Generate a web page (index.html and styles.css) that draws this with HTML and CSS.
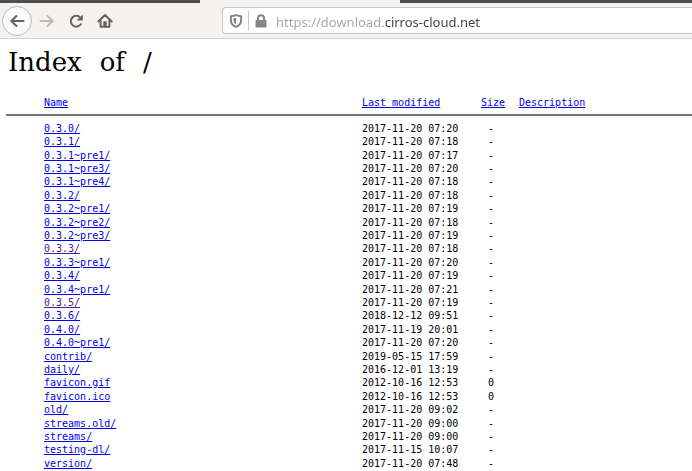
FILE: index.html
```
<!DOCTYPE html>
<html lang="en">
<head>
<meta charset="utf-8">
<title>Index of /</title>
<link rel="stylesheet" href="styles.css">
</head>
<body>
<header class="browser">
  <div class="tabstrip"><div class="tab"></div></div>
  <nav class="toolbar" aria-label="Browser">
    <button class="tool back" type="button" aria-label="Back">
      <svg width="16" height="16" viewBox="0 0 16 16"><path d="M14.500 8H2.500M7.500 3L2.300 8l5.200 5"/></svg>
    </button>
    <button class="tool forward" type="button" aria-label="Forward">
      <svg width="16" height="16" viewBox="0 0 16 16"><path d="M1.500 8h12M8.500 3l5.200 5-5.200 5"/></svg>
    </button>
    <button class="tool" type="button" aria-label="Reload">
      <svg width="16" height="16" viewBox="0 0 16 16"><path d="M12.800 11.200A5.400 5.400 0 1 1 12.300 4.600"/><path class="solid" d="M14.800 1.400v6.200H8.600z"/></svg>
    </button>
    <button class="tool" type="button" aria-label="Home">
      <svg width="16" height="16" viewBox="0 0 16 16"><path d="M1.300 8.500L8 2l6.700 6.500M3.600 7.500v6.300h8.800V7.500"/><path class="solid" d="M6.300 8.300h3.400v5.500H6.300z"/></svg>
    </button>
    <div class="address">
      <svg class="shield" width="14" height="14" viewBox="0 0 14 14"><path d="M7 1.200C5.500 1.900 3.700 2.200 1.900 2.200v4.300c0 3 2 5 5.100 6.400 3.100-1.400 5.100-3.400 5.100-6.400V2.200C10.300 2.200 8.500 1.900 7 1.200z"/><path class="solid" d="M7 3.800v6.500C5.200 9.300 4.400 8 4.400 6.300V4.300z"/></svg>
      <span class="divider"></span>
      <svg class="lock" width="12" height="14" viewBox="0 0 12 14"><path d="M3 7V4.200a3 3 0 0 1 6 0V7"/><rect class="solid" x="0.500" y="6" width="11" height="7.500" rx="1"/></svg>
      <input class="url" type="text" aria-label="Address" value="https://download.cirros-cloud.net">
    </div>
  </nav>
</header>
<main class="page">
  <h1 class="title"><span>Index</span> <span>of</span> <span>/</span></h1>
  <table class="listing">
    <thead>
      <tr><th class="name"><a href="#">Name</a></th><th class="modified"><a href="#">Last modified</a></th><th class="size"><a href="#">Size</a></th><th><a href="#">Description</a></th></tr>
    </thead>
    <tbody>
      <tr><td><a href="#">0.3.0/</a></td><td>2017-11-20 07:20</td><td>-</td><td></td></tr>
      <tr><td><a href="#">0.3.1/</a></td><td>2017-11-20 07:18</td><td>-</td><td></td></tr>
      <tr><td><a href="#">0.3.1~pre1/</a></td><td>2017-11-20 07:17</td><td>-</td><td></td></tr>
      <tr><td><a href="#">0.3.1~pre3/</a></td><td>2017-11-20 07:20</td><td>-</td><td></td></tr>
      <tr><td><a href="#">0.3.1~pre4/</a></td><td>2017-11-20 07:18</td><td>-</td><td></td></tr>
      <tr><td><a href="#">0.3.2/</a></td><td>2017-11-20 07:18</td><td>-</td><td></td></tr>
      <tr><td><a href="#">0.3.2~pre1/</a></td><td>2017-11-20 07:19</td><td>-</td><td></td></tr>
      <tr><td><a href="#">0.3.2~pre2/</a></td><td>2017-11-20 07:18</td><td>-</td><td></td></tr>
      <tr><td><a href="#">0.3.2~pre3/</a></td><td>2017-11-20 07:19</td><td>-</td><td></td></tr>
      <tr><td><a class="visited" href="#">0.3.3/</a></td><td>2017-11-20 07:18</td><td>-</td><td></td></tr>
      <tr><td><a href="#">0.3.3~pre1/</a></td><td>2017-11-20 07:20</td><td>-</td><td></td></tr>
      <tr><td><a href="#">0.3.4/</a></td><td>2017-11-20 07:19</td><td>-</td><td></td></tr>
      <tr><td><a href="#">0.3.4~pre1/</a></td><td>2017-11-20 07:21</td><td>-</td><td></td></tr>
      <tr><td><a class="visited" href="#">0.3.5/</a></td><td>2017-11-20 07:19</td><td>-</td><td></td></tr>
      <tr><td><a href="#">0.3.6/</a></td><td>2018-12-12 09:51</td><td>-</td><td></td></tr>
      <tr><td><a href="#">0.4.0/</a></td><td>2017-11-19 20:01</td><td>-</td><td></td></tr>
      <tr><td><a href="#">0.4.0~pre1/</a></td><td>2017-11-20 07:20</td><td>-</td><td></td></tr>
      <tr><td><a href="#">contrib/</a></td><td>2019-05-15 17:59</td><td>-</td><td></td></tr>
      <tr><td><a href="#">daily/</a></td><td>2016-12-01 13:19</td><td>-</td><td></td></tr>
      <tr><td><a href="#">favicon.gif</a></td><td>2012-10-16 12:53</td><td>0</td><td></td></tr>
      <tr><td><a href="#">favicon.ico</a></td><td>2012-10-16 12:53</td><td>0</td><td></td></tr>
      <tr><td><a href="#">old/</a></td><td>2017-11-20 09:02</td><td>-</td><td></td></tr>
      <tr><td><a href="#">streams.old/</a></td><td>2017-11-20 09:00</td><td>-</td><td></td></tr>
      <tr><td><a href="#">streams/</a></td><td>2017-11-20 09:00</td><td>-</td><td></td></tr>
      <tr><td><a href="#">testing-dl/</a></td><td>2017-11-15 10:07</td><td>-</td><td></td></tr>
      <tr><td><a href="#">version/</a></td><td>2017-11-20 07:48</td><td>-</td><td></td></tr>
    </tbody>
  </table>
</main>
</body>
</html>
```
FILE: styles.css
```
* { box-sizing: border-box; }

body {
  margin: 0;
  background: #fff;
  color: #000;
  font-family: "DejaVu Sans Mono", monospace;
  font-size: 10px;
  line-height: 13px;
}

.browser {
  background: #f3f2f1;
  border-bottom: 1px solid #d5d1ce;
}

.tabstrip {
  height: 3px;
  padding-left: 200px;
  background: #504e45;
}

.tab {
  width: 200px;
  height: 100%;
  background: #f3f2f1;
}

.toolbar {
  display: flex;
  align-items: center;
  height: 35px;
  padding-left: 2px;
}

.tool {
  display: flex;
  align-items: center;
  justify-content: center;
  width: 29px;
  height: 30px;
  padding: 0;
  border: 0;
  background: none;
}

.back {
  width: 30px;
  border: 1px solid #bab8b6;
  border-radius: 50%;
  background: #fbfbfb;
}

svg {
  flex: none;
  fill: none;
  stroke: #65635f;
  stroke-width: 2;
  stroke-linecap: round;
  stroke-linejoin: round;
}

.solid {
  fill: #65635f;
  stroke: none;
}

.forward svg { stroke: #bcbab8; }

.address {
  display: flex;
  flex: 1;
  align-items: center;
  height: 27px;
  margin-left: 103px;
  padding-left: 6px;
  border: 1px solid #c6c4c2;
  border-right: 0;
  border-radius: 4px 0 0 4px;
  background: #fff;
}

.shield { stroke: #858585; }
.lock { stroke: #858585; }
.address .solid { fill: #858585; }

.divider {
  width: 1px;
  height: 19px;
  margin: 0 6px 0 5px;
  background: #c8c8c8;
}

.url {
  flex: 1;
  min-width: 0;
  height: 25px;
  margin-left: 9px;
  padding: 2px 0 0;
  border: 0;
  outline: 0;
  background: linear-gradient(90deg, #a4a4a4 109px, #3c3c3c 109px);
  background-clip: text;
  color: transparent;
  font: 13px/23px "Noto Sans", sans-serif;
}

.page { padding-left: 6px; }

.title {
  display: flex;
  gap: 18px;
  margin: 0;
  padding: 7px 0 0 2px;
  font: 26px/32px "DejaVu Serif", serif;
}

.listing {
  width: 100%;
  margin-top: 18px;
  border-collapse: separate;
  border-spacing: 0;
  table-layout: fixed;
}

th, td {
  height: 13px;
  padding: 0;
  font-weight: 400;
  text-align: left;
  vertical-align: top;
}

th {
  height: 20px;
  border-bottom: 2px solid #747474;
}

.name { width: 356px; }
.modified { width: 119px; }
.size { width: 38px; }

th:first-child, td:first-child { padding-left: 38px; }
td:nth-child(3) { padding-left: 7px; }
tbody tr:first-child td { padding-top: 6px; }
tbody tr:nth-child(5n) td, tbody tr:nth-child(5n + 2) td { height: 14px; }

a { color: #0000ee; }
.visited { color: #551a8b; }
```
